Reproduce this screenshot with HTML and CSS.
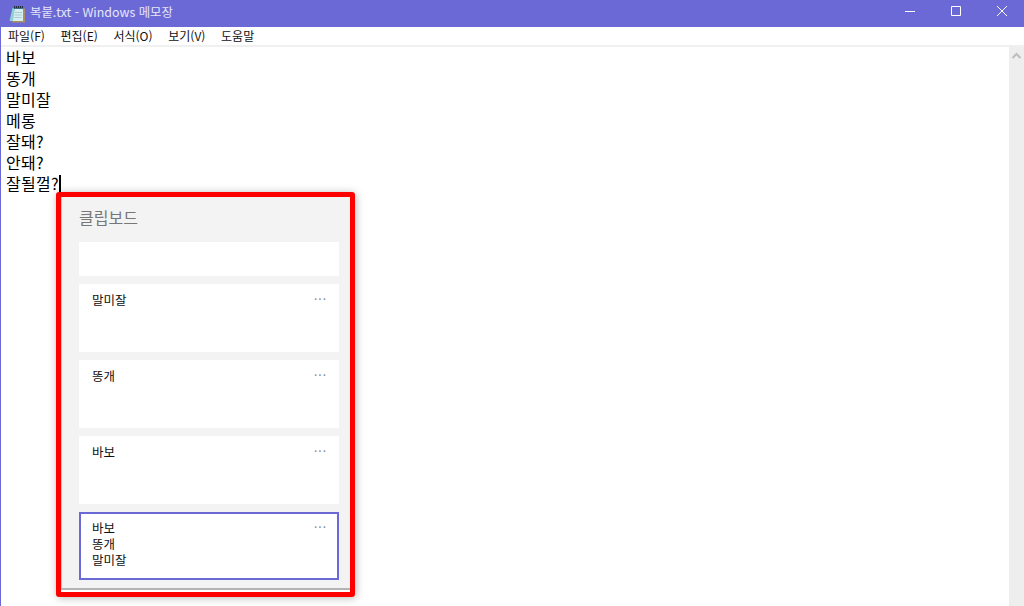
FILE: index.html
```html
<!DOCTYPE html>
<html lang="ko">
<head>
<meta charset="utf-8">
<title>복붙.txt - Windows 메모장</title>
<link rel="stylesheet" href="styles.css">
</head>
<body>
<div class="window">
  <header class="titlebar">
    <svg class="app-icon" width="18" height="18" viewBox="0 0 18 18">
      <path d="M5 3.500h12v14H4z" fill="#a98f62"/>
      <path d="M4.500 3h10.500v13H1.500z" fill="#8fd0d6"/>
      <path d="M7 3h8v13H5z" fill="#d6eef0"/>
      <path d="M6.500 1.500h8.500v2.500H5.500z" fill="#3f6f8c"/>
      <path d="M6.500 1v2M8.500 1v2M10.500 1v2M12.500 1v2M14.500 1v2" stroke="#20303c" stroke-width="1"/>
      <path d="M7 7.500h7M6.700 10h7M6.400 12.500h7" stroke="#a9cdd4" stroke-width="1"/>
    </svg>
    <span class="title">복붙.txt - Windows 메모장</span>
    <div class="controls">
      <svg class="ctl" width="46" height="27" viewBox="0 0 46 27"><path d="M18 11.500h10" stroke="#fff"/></svg>
      <svg class="ctl" width="46" height="27" viewBox="0 0 46 27"><path d="M18.500 6.500h9v9h-9z" fill="none" stroke="#fff"/></svg>
      <svg class="ctl" width="46" height="27" viewBox="0 0 46 27"><path d="M18 6l10 10M28 6L18 16" stroke="#fff" fill="none"/></svg>
    </div>
  </header>
  <nav class="menubar">
    <span class="menu-item">파일(F)</span>
    <span class="menu-item">편집(E)</span>
    <span class="menu-item">서식(O)</span>
    <span class="menu-item">보기(V)</span>
    <span class="menu-item">도움말</span>
  </nav>
  <main class="editor">
    <div class="text">
      <div>바보</div>
      <div>똥개</div>
      <div>말미잘</div>
      <div>메롱</div>
      <div>잘돼?</div>
      <div>안돼?</div>
      <div>잘될껄?<span class="caret"></span></div>
    </div>
    <div class="scrollbar">
      <svg class="arrow" width="15" height="15" viewBox="0 0 15 15"><path d="M3.500 10l4-4 4 4" fill="none" stroke="#bdbdbd" stroke-width="2"/></svg>
    </div>
  </main>
  <aside class="clipboard">
    <div class="panel">
      <h2 class="panel-title">클립보드</h2>
      <div class="cards">
        <div class="card empty"></div>
        <div class="card"><div>말미잘</div><span class="more">···</span></div>
        <div class="card"><div>똥개</div><span class="more">···</span></div>
        <div class="card"><div>바보</div><span class="more">···</span></div>
        <div class="card selected"><div>바보<br>똥개<br>말미잘</div><span class="more">···</span></div>
      </div>
    </div>
  </aside>
</div>
</body>
</html>
```
FILE: styles.css
```css
* { box-sizing: border-box; }
html, body { margin: 0; height: 100%; }
body { font-family: "Noto Sans CJK KR", "Noto Sans", sans-serif; background: #fff; overflow: hidden; }
.window { position: relative; height: 606px; display: flex; flex-direction: column; border-left: 1px solid #6b69d6; }
.titlebar { height: 27px; flex: none; background: #6b69d6; color: #fff; display: flex; align-items: center; padding-left: 8px; margin-left: -1px; }
.app-icon { flex: none; margin-top: 1px; }
.title { margin-left: 4px; margin-top: -4px; font-size: 12.4px; color: #e6e6f8; }
.controls { margin-left: auto; display: flex; margin-right: -1px; }
.ctl { display: block; }
.menubar { height: 18px; flex: none; display: flex; gap: 15.7px; padding-left: 7px; font-size: 12px; line-height: 18px; color: #111; }
.editor { flex: 1; display: flex; min-height: 0; border-top: 2px solid #f0f0f0; }
.text { flex: 1; padding: 0 0 0 5px; font-size: 16px; letter-spacing: .3px; line-height: 21px; color: #000; }
.caret { display: inline-block; width: 2px; height: 19px; background: #000; vertical-align: -4px; }
.scrollbar { width: 15px; flex: none; background: #eeeeee; }
.arrow { display: block; margin-top: 1px; }
.clipboard { position: absolute; left: 55px; top: 192px; width: 299px; height: 405px; border: 5px solid #f00; border-radius: 3px; box-shadow: 1px 1px 9px rgba(0,0,0,.28); background: #fff; }
.panel { height: 393px; background: #f3f3f3; border-left: 1px solid #c8c8c8; border-bottom: 2px solid #b4b4b4; padding: 8px 11px 0 17px; }
.panel-title { margin: 0; font-size: 16px; line-height: 24px; font-weight: 400; color: #777; height: 37px; }
.cards { display: flex; flex-direction: column; gap: 8px; }
.card { position: relative; height: 68px; background: #fff; padding: 8px 13px; font-size: 12.5px; line-height: 16px; color: #111; }
.card.empty { height: 34px; }
.card.selected { border: 2px solid #6b69d6; padding: 6px 11px; }
.more { position: absolute; right: 12px; top: 7px; font-size: 12px; line-height: 16px; letter-spacing: 1px; color: #888; }
.card.selected .more { right: 10px; top: 5px; }
```
